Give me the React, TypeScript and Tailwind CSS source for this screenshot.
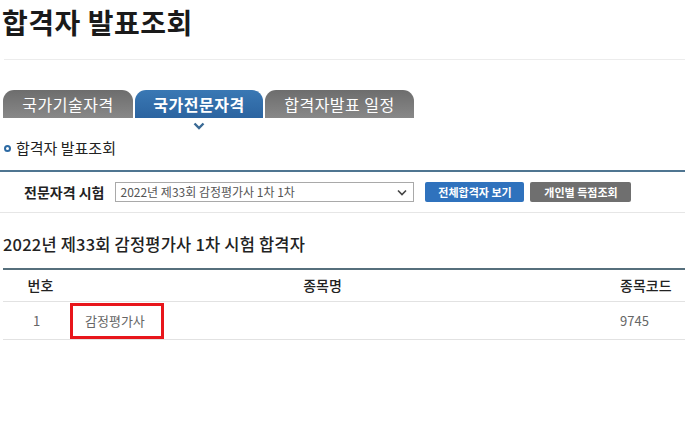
const TABS = [
  { label: "국가기술자격", active: false, width: "w-[130px]" },
  { label: "국가전문자격", active: true, width: "w-[128px]" },
  { label: "합격자발표 일정", active: false, width: "w-[149px]" },
];

const ROWS = [{ no: 1, name: "감정평가사", code: "9745" }];

function Tab({ label, active, width }: { label: string; active: boolean; width: string }) {
  return (
    <div className={`relative ${width}`}>
      <div
        className={`h-[28px] rounded-t-[11px] flex items-center justify-center text-[16px] tracking-[0.5px] ${
          active
            ? "bg-gradient-to-b from-[#3a78b4] to-[#2c64a0] text-white font-bold"
            : "bg-gradient-to-b from-[#6d6d6d] to-[#888888] text-white"
        }`}
      >
        {label}
      </div>
      {active && (
        <svg className="absolute left-1/2 -translate-x-1/2 top-[32px]" width="12" height="8" viewBox="0 0 12 8">
          <path d="M1.5 1.5 L6 6 L10.5 1.5" fill="none" stroke="#3a6a95" strokeWidth="2.4" />
        </svg>
      )}
    </div>
  );
}

export default function App() {
  return (
    <div
      className="w-[685px] h-[426px] bg-white overflow-hidden text-[#222]"
      style={{ fontFamily: '"Noto Sans CJK KR", "Noto Sans", sans-serif' }}
    >
      {/* ── Page title ─────────────────────────────────────────────── */}
      <h1 className="pl-[2px] pt-[4px] text-[28px] font-bold leading-[36px] tracking-[0.5px] text-[#1a1a1a]">합격자 발표조회</h1>
      <div className="ml-[4px] mt-[19px] border-t border-[#ececec]" />

      {/* ── Tabs ───────────────────────────────────────────────────── */}
      <div className="mt-[30px] pl-[3px] flex gap-[2px]">
        {TABS.map((t) => (
          <Tab key={t.label} {...t} />
        ))}
      </div>

      {/* ── Sub title ──────────────────────────────────────────────── */}
      <div className="mt-[20px] pl-[4px] flex items-center gap-[5px]">
        <span className="w-[7px] h-[7px] rounded-full border-2 border-[#2d6aa3]" />
        <span className="text-[15px] leading-[20px] text-[#222]">합격자 발표조회</span>
      </div>

      {/* ── Search bar ─────────────────────────────────────────────── */}
      <div className="mt-[12px] border-t-2 border-[#4f7591]" />
      <div className="h-[41px] flex items-center pl-[24px] border-b border-[#e6e6e6]">
        <span className="text-[14px] font-bold text-[#222] mr-[11px]">전문자격 시험</span>
        <div className="w-[299px] h-[20px] border border-[#a9a9a9] flex items-center justify-between pl-[4px] pr-[6px] text-[12px] text-[#555]">
          <span>2022년 제33회 감정평가사 1차 1차</span>
          <svg width="10" height="7" viewBox="0 0 10 7">
            <path d="M1 1.5 L5 5.5 L9 1.5" fill="none" stroke="#444" strokeWidth="1.6" />
          </svg>
        </div>
        <button className="ml-[11px] w-[99px] h-[20px] rounded-[2px] bg-[#2f72bd] text-white text-[11px] font-bold">
          전체합격자 보기
        </button>
        <button className="ml-[6px] w-[101px] h-[20px] rounded-[2px] bg-[#6f6f6f] text-white text-[11px] font-bold">
          개인별 득점조회
        </button>
      </div>

      {/* ── Result heading ─────────────────────────────────────────── */}
      <h2 className="mt-[20px] pl-[3px] text-[16.5px] font-medium leading-[22px] tracking-[0.2px] text-[#222]">
        2022년 제33회 감정평가사 1차 시험 합격자
      </h2>

      {/* ── Table ──────────────────────────────────────────────────── */}
      <div className="mt-[13px] ml-[3px] border-t-2 border-[#566f7c]">
        <div className="h-[32px] grid grid-cols-[67px_1fr_90px] items-center border-b border-[#e2e2e2] text-[14px] font-medium text-[#222]">
          <span className="text-center pl-[8px]">번호</span>
          <span className="text-center pr-[20px]">종목명</span>
          <span className="pl-[25px]">종목코드</span>
        </div>
        {ROWS.map((r) => (
          <div
            key={r.no}
            className="h-[38px] grid grid-cols-[67px_1fr_90px] items-center border-b border-[#e2e2e2] text-[13px] text-[#666]"
          >
            <span className="text-center">{r.no}</span>
            <div className="flex items-center">
              <span className="w-[94px] h-[36px] border-[3px] border-[#e8161b] flex items-center pl-[12px]">{r.name}</span>
            </div>
            <span className="pl-[25px]">{r.code}</span>
          </div>
        ))}
      </div>
    </div>
  );
}
